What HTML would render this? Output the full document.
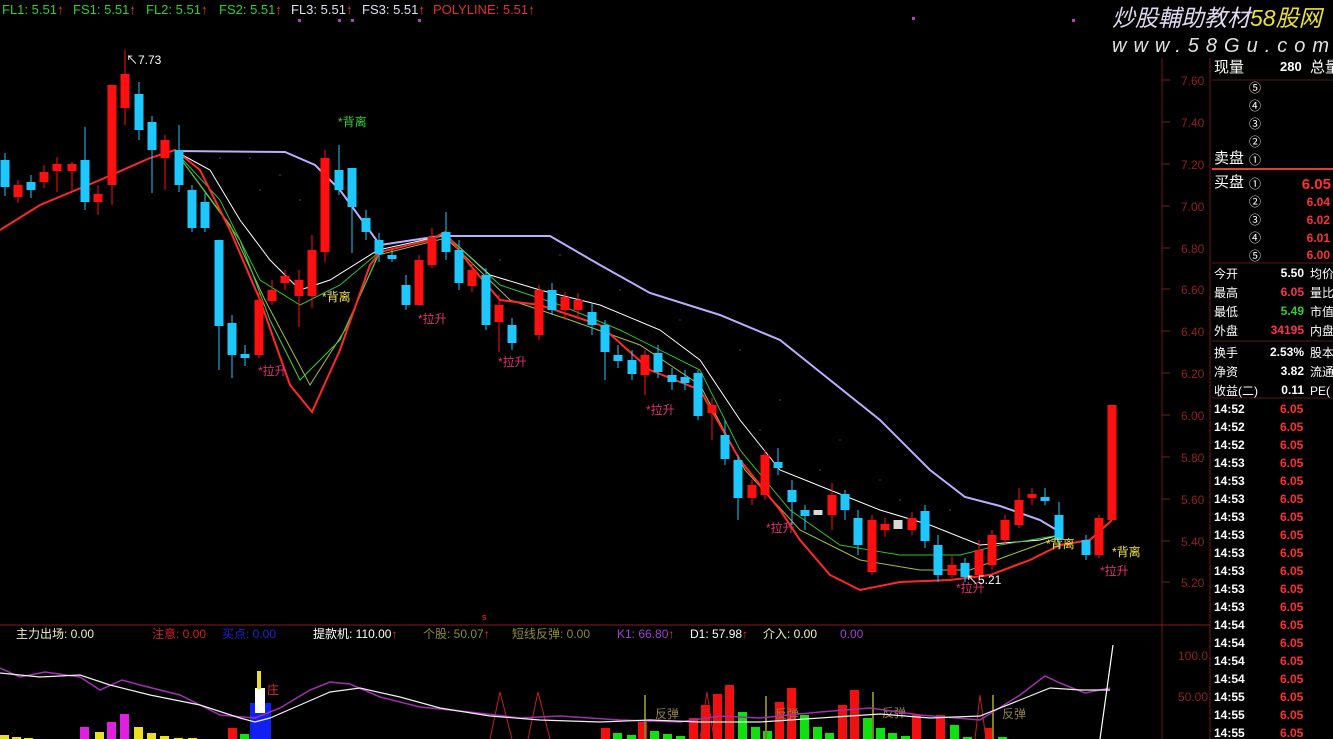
<!DOCTYPE html>
<html><head><meta charset="utf-8"><style>
html,body{margin:0;padding:0;background:#000;width:1333px;height:739px;overflow:hidden}
svg{display:block}
text{font-family:"Liberation Sans","Noto Sans CJK SC",sans-serif;font-size:12px}
.c{fill:#1ec8ff}.r{fill:#ff1010}.cw{stroke:#1ec8ff;stroke-width:1}.rw{stroke:#ff1010;stroke-width:1}
.h{font-size:13px}
.ci{font-family:"Noto Sans CJK SC",sans-serif;font-size:16px}
</style></head><body>
<svg width="1333" height="739" viewBox="0 0 1333 739" xmlns="http://www.w3.org/2000/svg">
<rect width="1333" height="739" fill="#000"/>
<!-- header -->
<g class="h" style="font-size:13px">
<text x="2" y="14" fill="#30d030" style="font-size:13px">FL1: 5.51<tspan fill="#ff3030">↑</tspan></text>
<text x="73" y="14" fill="#30d030" style="font-size:13px">FS1: 5.51<tspan fill="#ff3030">↑</tspan></text>
<text x="146" y="14" fill="#30d030" style="font-size:13px">FL2: 5.51<tspan fill="#ff3030">↑</tspan></text>
<text x="219" y="14" fill="#30d030" style="font-size:13px">FS2: 5.51<tspan fill="#ff3030">↑</tspan></text>
<text x="291" y="14" fill="#e0e0f0" style="font-size:13px">FL3: 5.51<tspan fill="#ff3030">↑</tspan></text>
<text x="362" y="14" fill="#e0e0f0" style="font-size:13px">FS3: 5.51<tspan fill="#ff3030">↑</tspan></text>
<text x="433" y="14" fill="#e03030" style="font-size:13px">POLYLINE: 5.51<tspan fill="#ff3030">↑</tspan></text>
</g>
<g fill="#b040c0"><rect x="298" y="19" width="3" height="3"/><rect x="338" y="19" width="3" height="3"/><rect x="351" y="19" width="3" height="3"/><rect x="418" y="19" width="3" height="3"/><rect x="912" y="17" width="3" height="3"/><rect x="1072" y="19" width="3" height="3"/></g>
<!-- logo -->
<text x="1112" y="26" fill="#e0d8f0" style="font-size:23px;font-style:italic">炒股輔助教材<tspan fill="#e8e040">58股网</tspan></text>
<text x="1112" y="52" style="font-size:20px;font-style:italic;letter-spacing:7px" fill="#e0e0e0">www.58Gu.com</text>
<!-- axes -->
<line x1="1162" y1="58" x2="1162" y2="739" stroke="#701818"/>
<line x1="1210" y1="58" x2="1210" y2="739" stroke="#701818"/>
<line x1="0" y1="625" x2="1210" y2="625" stroke="#802020"/>
<g fill="#902020" style="font-size:12px">
<text x="1181" y="85">7.60</text><text x="1181" y="127">7.40</text><text x="1181" y="169">7.20</text><text x="1181" y="211">7.00</text><text x="1181" y="253">6.80</text><text x="1181" y="294">6.60</text><text x="1181" y="336">6.40</text><text x="1181" y="378">6.20</text><text x="1181" y="420">6.00</text><text x="1181" y="462">5.80</text><text x="1181" y="504">5.60</text><text x="1181" y="546">5.40</text><text x="1181" y="587">5.20</text>
<text x="1178" y="660">100.0</text><text x="1178" y="701">50.00</text>
</g>
<g stroke="#702020"><line x1="1162" y1="80" x2="1170" y2="80"/><line x1="1162" y1="122" x2="1170" y2="122"/><line x1="1162" y1="164" x2="1170" y2="164"/><line x1="1162" y1="206" x2="1170" y2="206"/><line x1="1162" y1="248" x2="1170" y2="248"/><line x1="1162" y1="289" x2="1170" y2="289"/><line x1="1162" y1="331" x2="1170" y2="331"/><line x1="1162" y1="373" x2="1170" y2="373"/><line x1="1162" y1="415" x2="1170" y2="415"/><line x1="1162" y1="457" x2="1170" y2="457"/><line x1="1162" y1="499" x2="1170" y2="499"/><line x1="1162" y1="541" x2="1170" y2="541"/><line x1="1162" y1="582" x2="1170" y2="582"/></g>
<!-- dotted area -->
<g fill="#333"><circle cx="220" cy="158" r="1"/><circle cx="250" cy="158" r="1"/><circle cx="280" cy="175" r="1"/><circle cx="260" cy="190" r="1"/><circle cx="300" cy="200" r="1"/><circle cx="500" cy="260" r="1"/><circle cx="560" cy="255" r="1"/><circle cx="620" cy="290" r="1"/><circle cx="680" cy="320" r="1"/><circle cx="740" cy="350" r="1"/><circle cx="780" cy="400" r="1"/><circle cx="840" cy="440" r="1"/><circle cx="880" cy="480" r="1"/><circle cx="700" cy="380" r="1"/><circle cx="760" cy="430" r="1"/><circle cx="820" cy="470" r="1"/><circle cx="900" cy="500" r="1"/><circle cx="950" cy="510" r="1"/></g>
<!-- lines -->
<polyline fill="none" stroke="#b8b0ff" stroke-width="2" points="175,151 285,152 315,165 340,190 380,245 400,242 440,236 550,236 600,265 650,293 720,315 780,340 830,380 880,420 930,470 965,497 1000,506 1040,520 1060,532"/>
<polyline fill="none" stroke="#fff" stroke-width="1" points="175,151 210,170 240,220 270,260 300,290 330,280 378,250 446,235 490,275 540,290 600,305 660,330 700,360 740,420 780,470 830,490 880,510 930,525 980,545 1040,540 1060,535"/>
<polyline fill="none" stroke="#30c030" stroke-width="1" points="175,151 220,200 260,280 300,305 340,285 378,253 446,235 500,285 560,305 620,330 700,370 740,450 790,510 840,545 900,555 960,555 1000,545 1060,535"/>
<polyline fill="none" stroke="#a0c040" stroke-width="1" points="175,151 230,225 265,300 310,385 345,330 378,255 446,238 510,300 570,320 640,345 700,385 745,470 800,530 860,560 920,570 970,570 1010,555 1060,537"/>
<polyline fill="none" stroke="#40d040" stroke-width="1" points="175,151 240,240 270,320 300,380 340,340 378,256"/>
<polyline fill="none" stroke="#ff2828" stroke-width="2" points="0,230 40,205 100,180 150,158 175,150 200,170 230,230 260,300 290,385 312,412 340,350 370,265 380,252 430,240 445,232 470,265 500,300 540,305 600,325 650,370 700,390 740,460 780,510 800,540 830,575 860,590 900,582 950,580 990,575 1030,560 1060,545 1090,540 1112,520"/>
<!-- candles -->
<g class="cw"><line x1="5" y1="153" x2="5" y2="196"/><line x1="31" y1="175" x2="31" y2="198"/><line x1="85" y1="127" x2="85" y2="210"/><line x1="139" y1="82" x2="139" y2="140"/><line x1="152" y1="116" x2="152" y2="193"/><line x1="179" y1="125" x2="179" y2="192"/><line x1="192" y1="185" x2="192" y2="232"/><line x1="205" y1="193" x2="205" y2="232"/><line x1="219" y1="240" x2="219" y2="370"/><line x1="232" y1="315" x2="232" y2="378"/><line x1="245" y1="345" x2="245" y2="366"/><line x1="339" y1="145" x2="339" y2="195"/><line x1="352" y1="168" x2="352" y2="253"/><line x1="366" y1="210" x2="366" y2="240"/><line x1="379" y1="233" x2="379" y2="262"/><line x1="392" y1="250" x2="392" y2="262"/><line x1="406" y1="275" x2="406" y2="310"/><line x1="446" y1="212" x2="446" y2="260"/><line x1="459" y1="240" x2="459" y2="290"/><line x1="486" y1="268" x2="486" y2="330"/><line x1="512" y1="318" x2="512" y2="350"/><line x1="552" y1="283" x2="552" y2="315"/><line x1="592" y1="303" x2="592" y2="335"/><line x1="605" y1="320" x2="605" y2="380"/><line x1="618" y1="345" x2="618" y2="368"/><line x1="632" y1="350" x2="632" y2="380"/><line x1="658" y1="345" x2="658" y2="378"/><line x1="672" y1="368" x2="672" y2="390"/><line x1="685" y1="370" x2="685" y2="390"/><line x1="698" y1="370" x2="698" y2="420"/><line x1="725" y1="420" x2="725" y2="465"/><line x1="738" y1="455" x2="738" y2="520"/><line x1="778" y1="448" x2="778" y2="475"/><line x1="792" y1="480" x2="792" y2="525"/><line x1="805" y1="505" x2="805" y2="530"/><line x1="845" y1="490" x2="845" y2="520"/><line x1="858" y1="510" x2="858" y2="555"/><line x1="925" y1="505" x2="925" y2="548"/><line x1="938" y1="535" x2="938" y2="582"/><line x1="965" y1="558" x2="965" y2="582"/><line x1="1045" y1="488" x2="1045" y2="505"/><line x1="1059" y1="502" x2="1059" y2="548"/><line x1="1086" y1="535" x2="1086" y2="560"/></g>
<g class="rw"><line x1="18" y1="180" x2="18" y2="203"/><line x1="44" y1="165" x2="44" y2="188"/><line x1="57" y1="157" x2="57" y2="192"/><line x1="72" y1="162" x2="72" y2="190"/><line x1="98" y1="185" x2="98" y2="215"/><line x1="112" y1="85" x2="112" y2="205"/><line x1="125" y1="50" x2="125" y2="125"/><line x1="165" y1="135" x2="165" y2="190"/><line x1="259" y1="292" x2="259" y2="358"/><line x1="272" y1="280" x2="272" y2="305"/><line x1="285" y1="270" x2="285" y2="290"/><line x1="299" y1="270" x2="299" y2="327"/><line x1="312" y1="235" x2="312" y2="308"/><line x1="325" y1="150" x2="325" y2="262"/><line x1="419" y1="255" x2="419" y2="305"/><line x1="432" y1="228" x2="432" y2="268"/><line x1="472" y1="262" x2="472" y2="292"/><line x1="499" y1="295" x2="499" y2="352"/><line x1="539" y1="285" x2="539" y2="340"/><line x1="565" y1="292" x2="565" y2="320"/><line x1="578" y1="293" x2="578" y2="318"/><line x1="645" y1="350" x2="645" y2="395"/><line x1="712" y1="398" x2="712" y2="440"/><line x1="752" y1="480" x2="752" y2="505"/><line x1="765" y1="450" x2="765" y2="500"/><line x1="832" y1="483" x2="832" y2="530"/><line x1="872" y1="515" x2="872" y2="575"/><line x1="885" y1="518" x2="885" y2="537"/><line x1="912" y1="512" x2="912" y2="535"/><line x1="952" y1="556" x2="952" y2="578"/><line x1="979" y1="540" x2="979" y2="582"/><line x1="992" y1="530" x2="992" y2="570"/><line x1="1005" y1="515" x2="1005" y2="545"/><line x1="1019" y1="488" x2="1019" y2="528"/><line x1="1032" y1="488" x2="1032" y2="505"/><line x1="1099" y1="515" x2="1099" y2="558"/></g>
<g class="c"><rect x="0.5" y="160" width="9" height="27"/><rect x="26.5" y="182" width="9" height="8"/><rect x="80.5" y="160" width="9" height="42"/><rect x="134.5" y="94" width="9" height="36"/><rect x="147.5" y="122" width="9" height="28"/><rect x="174.5" y="150" width="9" height="35"/><rect x="187.5" y="190" width="9" height="38"/><rect x="200.5" y="202" width="9" height="26"/><rect x="214.5" y="240" width="9" height="86"/><rect x="227.5" y="323" width="9" height="32"/><rect x="240.5" y="354" width="9" height="4"/><rect x="334.5" y="170" width="9" height="20"/><rect x="347.5" y="168" width="9" height="39"/><rect x="361.5" y="218" width="9" height="14"/><rect x="374.5" y="240" width="9" height="14"/><rect x="387.5" y="255" width="9" height="4"/><rect x="401.5" y="285" width="9" height="20"/><rect x="441.5" y="232" width="9" height="20"/><rect x="454.5" y="250" width="9" height="33"/><rect x="481.5" y="275" width="9" height="50"/><rect x="507.5" y="325" width="9" height="18"/><rect x="547.5" y="290" width="9" height="20"/><rect x="587.5" y="312" width="9" height="13"/><rect x="600.5" y="325" width="9" height="27"/><rect x="613.5" y="355" width="9" height="6"/><rect x="627.5" y="360" width="9" height="14"/><rect x="653.5" y="353" width="9" height="19"/><rect x="667.5" y="375" width="9" height="7"/><rect x="680.5" y="377" width="9" height="6"/><rect x="693.5" y="373" width="9" height="43"/><rect x="720.5" y="435" width="9" height="24"/><rect x="733.5" y="460" width="9" height="38"/><rect x="773.5" y="462" width="9" height="6"/><rect x="787.5" y="490" width="9" height="12"/><rect x="800.5" y="510" width="9" height="6"/><rect x="840.5" y="494" width="9" height="16"/><rect x="853.5" y="518" width="9" height="27"/><rect x="920.5" y="511" width="9" height="30"/><rect x="933.5" y="545" width="9" height="30"/><rect x="960.5" y="563" width="9" height="14"/><rect x="1040.5" y="497" width="9" height="4"/><rect x="1054.5" y="515" width="9" height="25"/><rect x="1081.5" y="540" width="9" height="15"/></g>
<g fill="#d8d8d8"><rect x="813.5" y="510" width="9" height="5"/><rect x="893.5" y="520" width="9" height="9"/></g>
<g class="r"><rect x="13.5" y="185" width="9" height="12"/><rect x="39.5" y="172" width="9" height="10"/><rect x="52.5" y="164" width="9" height="7"/><rect x="67.5" y="164" width="9" height="7"/><rect x="93.5" y="194" width="9" height="8"/><rect x="107.5" y="85" width="9" height="100"/><rect x="120.5" y="74" width="9" height="34"/><rect x="160.5" y="140" width="9" height="18"/><rect x="254.5" y="300" width="9" height="55"/><rect x="267.5" y="290" width="9" height="11"/><rect x="280.5" y="276" width="9" height="7"/><rect x="294.5" y="280" width="9" height="16"/><rect x="307.5" y="250" width="9" height="46"/><rect x="320.5" y="158" width="9" height="94"/><rect x="414.5" y="260" width="9" height="45"/><rect x="427.5" y="237" width="9" height="28"/><rect x="467.5" y="270" width="9" height="16"/><rect x="494.5" y="305" width="9" height="17"/><rect x="534.5" y="290" width="9" height="45"/><rect x="560.5" y="297" width="9" height="13"/><rect x="573.5" y="300" width="9" height="10"/><rect x="640.5" y="355" width="9" height="20"/><rect x="707.5" y="405" width="9" height="8"/><rect x="747.5" y="485" width="9" height="13"/><rect x="760.5" y="455" width="9" height="40"/><rect x="827.5" y="495" width="9" height="20"/><rect x="867.5" y="520" width="9" height="52"/><rect x="880.5" y="524" width="9" height="6"/><rect x="907.5" y="518" width="9" height="12"/><rect x="947.5" y="565" width="9" height="10"/><rect x="974.5" y="550" width="9" height="25"/><rect x="987.5" y="535" width="9" height="30"/><rect x="1000.5" y="520" width="9" height="20"/><rect x="1014.5" y="500" width="9" height="25"/><rect x="1027.5" y="494" width="9" height="4"/><rect x="1094.5" y="518" width="9" height="37"/><rect x="1107.5" y="405" width="9" height="115"/></g>
<!-- labels -->
<text x="126" y="64" fill="#fff">↖7.73</text>
<text x="338" y="126" fill="#30d030">*背离</text>
<text x="322" y="301" fill="#f0e040">*背离</text>
<text x="258" y="375" fill="#e03070">*拉升</text>
<text x="418" y="323" fill="#e03070">*拉升</text>
<text x="498" y="366" fill="#e03070">*拉升</text>
<text x="646" y="414" fill="#e03070">*拉升</text>
<text x="766" y="532" fill="#e03070">*拉升</text>
<text x="956" y="592" fill="#e03070">*拉升</text>
<text x="966" y="584" fill="#fff">↖5.21</text>
<text x="1046" y="548" fill="#f0e040">*背离</text>
<text x="1112" y="556" fill="#f0e040">*背离</text>
<text x="1100" y="575" fill="#e03070">*拉升</text>
<!-- lower header -->
<text x="16" y="638" fill="#f0f0c0">主力出场: 0.00</text>
<text x="152" y="638" fill="#d02020">注意: 0.00</text>
<text x="222" y="638" fill="#2020e0">买点: 0.00</text>
<text x="313" y="638" fill="#fff">提款机: 110.00<tspan fill="#ff3030">↑</tspan></text>
<text x="423" y="638" fill="#8c8c30">个股: 50.07<tspan fill="#ff3030">↑</tspan></text>
<text x="512" y="638" fill="#8c8c30">短线反弹: 0.00</text>
<text x="617" y="638" fill="#a040d0">K1: 66.80<tspan fill="#ff3030">↑</tspan></text>
<text x="690" y="638" fill="#fff">D1: 57.98<tspan fill="#ff3030">↑</tspan></text>
<text x="763" y="638" fill="#f0f0d0">介入: 0.00</text>
<text x="840" y="638" fill="#a040d0">0.00</text>
<text x="482" y="620" fill="#ff3030" style="font-size:9px">s</text>
<!-- lower bars -->
<g fill="#e8e020"><rect x="0" y="735" width="9" height="4"/><rect x="12" y="737" width="9" height="2"/><rect x="24" y="738" width="9" height="1"/><rect x="95" y="732" width="9" height="7"/><rect x="134" y="727" width="9" height="12"/><rect x="147" y="733" width="9" height="6"/><rect x="160" y="736" width="9" height="3"/><rect x="174" y="738" width="9" height="1"/><rect x="188" y="738" width="9" height="1"/></g>
<g fill="#e020e0"><rect x="80" y="727" width="9" height="12"/><rect x="107" y="722" width="9" height="17"/><rect x="120" y="714" width="9" height="25"/></g>
<g fill="#10e010"><rect x="240" y="734" width="9" height="5"/><rect x="613" y="733" width="9" height="6"/><rect x="627" y="735" width="9" height="4"/><rect x="650" y="731" width="9" height="8"/><rect x="663" y="734" width="9" height="5"/><rect x="676" y="736" width="9" height="3"/><rect x="738" y="712" width="9" height="27"/><rect x="751" y="727" width="9" height="12"/><rect x="763" y="731" width="9" height="8"/><rect x="800" y="715" width="9" height="24"/><rect x="813" y="727" width="9" height="12"/><rect x="825" y="733" width="9" height="6"/><rect x="863" y="718" width="9" height="21"/><rect x="876" y="728" width="9" height="11"/><rect x="888" y="733" width="9" height="6"/><rect x="901" y="736" width="9" height="3"/><rect x="950" y="725" width="9" height="14"/><rect x="963" y="737" width="9" height="2"/><rect x="998" y="737" width="9" height="2"/></g>
<g fill="#f01010"><rect x="228" y="728" width="9" height="11"/><rect x="601" y="728" width="9" height="11"/><rect x="638" y="722" width="9" height="17"/><rect x="689" y="718" width="9" height="21"/><rect x="701" y="705" width="9" height="34"/><rect x="713" y="694" width="9" height="45"/><rect x="725" y="685" width="9" height="54"/><rect x="775" y="702" width="9" height="37"/><rect x="787" y="688" width="9" height="51"/><rect x="838" y="705" width="9" height="34"/><rect x="850" y="690" width="9" height="49"/><rect x="912" y="715" width="9" height="24"/><rect x="936" y="715" width="9" height="24"/><rect x="985" y="728" width="9" height="11"/></g>
<rect x="250" y="703" width="21" height="36" fill="#1020f0"/>
<rect x="255" y="688" width="10" height="25" fill="#fff"/>
<rect x="257" y="671" width="4" height="18" fill="#e8e020"/>
<text x="267" y="694" fill="#e03030">庄</text>
<g stroke="#808020" stroke-width="2"><line x1="645" y1="695" x2="645" y2="739"/><line x1="766" y1="696" x2="766" y2="739"/><line x1="873" y1="692" x2="873" y2="739"/><line x1="993" y1="695" x2="993" y2="739"/></g>
<g fill="#908040"><text x="655" y="718">反弹</text><text x="775" y="718">反弹</text><text x="882" y="717">反弹</text><text x="1002" y="718">反弹</text></g>
<g fill="none" stroke="#c02020"><polyline points="490,739 500,692 512,739"/><polyline points="528,739 538,692 550,739"/><polyline points="700,739 707,692 714,739"/><polyline points="975,739 980,695 986,739"/></g>
<polyline fill="none" stroke="#a030b0" stroke-width="1.5" points="0,668 20,677 45,672 80,677 100,690 122,680 140,685 180,695 220,715 255,718 280,708 310,690 330,682 350,684 380,697 420,707 470,712 520,718 560,716 620,720 680,722 720,716 760,718 820,712 870,708 920,715 980,720 1020,695 1045,676 1060,683 1085,693 1110,688"/>
<polyline fill="none" stroke="#f0f0f0" stroke-width="1.2" points="0,673 40,677 80,675 110,685 150,695 200,705 240,718 255,722 270,718 300,705 330,692 360,688 400,697 440,708 490,716 540,720 600,722 650,720 700,722 760,722 820,718 880,714 930,718 980,716 1020,700 1050,688 1080,690 1110,690"/>
<line x1="1100" y1="739" x2="1113" y2="645" stroke="#fff" stroke-width="1.2"/>
<!-- right panel -->
<g fill="#fff" style="font-size:14px">
<text x="1214" y="72" style="font-size:15px">现量</text><text x="1280" y="71" style="font-weight:bold;font-size:13px">280</text><text x="1310" y="72" style="font-size:15px">总量</text>
<text x="1214" y="163" style="font-size:15px">卖盘</text>
<text x="1214" y="187" style="font-size:15px">买盘</text>
</g>
<g fill="#fff" class="ci" style="font-family:'Noto Sans CJK SC',sans-serif;font-size:16px">
<text x="1249" y="92">⑤</text><text x="1249" y="110">④</text><text x="1249" y="128">③</text><text x="1249" y="146">②</text><text x="1249" y="164">①</text>
<text x="1249" y="188">①</text><text x="1249" y="206">②</text><text x="1249" y="224">③</text><text x="1249" y="242">④</text><text x="1249" y="260">⑤</text>
</g>
<line x1="1212" y1="169" x2="1333" y2="169" stroke="#e04040" stroke-width="2"/>
<g stroke="#5a1818"><line x1="1212" y1="80" x2="1333" y2="80"/><line x1="1212" y1="263" x2="1333" y2="263"/><line x1="1212" y1="341" x2="1333" y2="341"/><line x1="1212" y1="398" x2="1333" y2="398"/></g>
<g fill="#ff3030" text-anchor="end" style="font-weight:bold">
<text x="1331" y="189" style="font-size:15px">6.05</text><text x="1330" y="206">6.04</text><text x="1330" y="224">6.02</text><text x="1330" y="242">6.01</text><text x="1330" y="259">6.00</text>
</g>
<g fill="#fff" style="font-size:15px"><text x="1214" y="278">今开</text><text x="1214" y="297">最高</text><text x="1214" y="316">最低</text><text x="1214" y="335">外盘</text><text x="1214" y="357">换手</text><text x="1214" y="376">净资</text><text x="1214" y="395">收益(二)</text>
<text x="1310" y="278">均价</text><text x="1310" y="297">量比</text><text x="1310" y="316">市值</text><text x="1310" y="335">内盘</text><text x="1310" y="357">股本</text><text x="1310" y="376">流通</text><text x="1310" y="395">PE(</text></g>
<g text-anchor="end" style="font-weight:bold;font-size:13px"><text x="1304" y="277" fill="#fff">5.50</text><text x="1304" y="296" fill="#ff3050">6.05</text><text x="1304" y="315" fill="#30d030">5.49</text><text x="1304" y="334" fill="#ff3050">34195</text><text x="1304" y="356" fill="#fff">2.53%</text><text x="1304" y="375" fill="#fff">3.82</text><text x="1304" y="394" fill="#fff">0.11</text></g>
<g style="font-weight:bold;font-size:13px">
<g fill="#fff"><text x="1214" y="413">14:52</text><text x="1214" y="431">14:52</text><text x="1214" y="449">14:52</text><text x="1214" y="467">14:53</text><text x="1214" y="485">14:53</text><text x="1214" y="503">14:53</text><text x="1214" y="521">14:53</text><text x="1214" y="539">14:53</text><text x="1214" y="557">14:53</text><text x="1214" y="575">14:53</text><text x="1214" y="593">14:53</text><text x="1214" y="611">14:53</text><text x="1214" y="629">14:54</text><text x="1214" y="647">14:54</text><text x="1214" y="665">14:54</text><text x="1214" y="683">14:54</text><text x="1214" y="701">14:55</text><text x="1214" y="719">14:55</text><text x="1214" y="737">14:55</text></g>
<g fill="#ff3030"><text x="1280" y="413">6.05</text><text x="1280" y="431">6.05</text><text x="1280" y="449">6.05</text><text x="1280" y="467">6.05</text><text x="1280" y="485">6.05</text><text x="1280" y="503">6.05</text><text x="1280" y="521">6.05</text><text x="1280" y="539">6.05</text><text x="1280" y="557">6.05</text><text x="1280" y="575">6.05</text><text x="1280" y="593">6.05</text><text x="1280" y="611">6.05</text><text x="1280" y="629">6.05</text><text x="1280" y="647">6.05</text><text x="1280" y="665">6.05</text><text x="1280" y="683">6.05</text><text x="1280" y="701">6.05</text><text x="1280" y="719">6.05</text><text x="1280" y="737">6.05</text></g>
</g>
</svg>
</body></html>
